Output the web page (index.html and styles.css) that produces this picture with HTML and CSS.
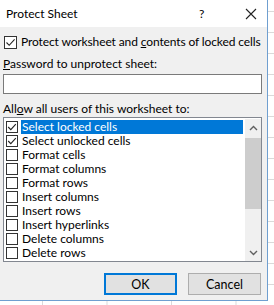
FILE: index.html
```html
<!DOCTYPE html>
<html lang="en">
<head>
    <meta charset="UTF-8">
    <title>Protect Sheet</title>
    <link rel="stylesheet" href="styles.css">
</head>
<body>

<div class="dialog">
    <div class="titlebar">
        <span class="title">Protect Sheet</span>
        <span class="help">?</span>
        <span class="close">
            <svg width="12" height="12" viewBox="0 0 12 12"><path d="M1 1L11 11M11 1L1 11" stroke="#222" stroke-width="1.1" fill="none"/></svg>
        </span>
    </div>

    <div class="content">
        <div class="check-row main">
            <span class="box"><svg width="11" height="11" viewBox="0 0 11 11"><path d="M1.5 5.5L4.2 8.3L9.6 2.4" stroke="#222" stroke-width="1.1" fill="none"/></svg></span>
            <span class="main-text">Protect worksheet and <u>c</u>ontents of locked cells</span>
        </div>

        <div class="label"><u>P</u>assword to unprotect sheet:</div>
        <div class="input"></div>

        <div class="label allow">All<u>o</u>w all users of this worksheet to:</div>

        <div class="list">
            <div class="items">
                <div class="item selected">
                    <span class="box"><svg width="10" height="10" viewBox="0 0 10 10"><path d="M1.2 5L3.8 7.6L8.8 2.2" stroke="#222" stroke-width="1.1" fill="none"/></svg></span>
                    <span class="text">Select locked cells</span>
                </div>
                <div class="item">
                    <span class="box"><svg width="10" height="10" viewBox="0 0 10 10"><path d="M1.2 5L3.8 7.6L8.8 2.2" stroke="#222" stroke-width="1.1" fill="none"/></svg></span>
                    <span class="text">Select unlocked cells</span>
                </div>
                <div class="item"><span class="box"></span><span class="text">Format cells</span></div>
                <div class="item"><span class="box"></span><span class="text">Format columns</span></div>
                <div class="item"><span class="box"></span><span class="text">Format rows</span></div>
                <div class="item"><span class="box"></span><span class="text">Insert columns</span></div>
                <div class="item"><span class="box"></span><span class="text">Insert rows</span></div>
                <div class="item"><span class="box"></span><span class="text">Insert hyperlinks</span></div>
                <div class="item"><span class="box"></span><span class="text">Delete columns</span></div>
                <div class="item"><span class="box"></span><span class="text">Delete rows</span></div>
            </div>
            <div class="scrollbar">
                <div class="arrow"><svg width="9" height="6" viewBox="0 0 9 6"><path d="M1 5L4.5 1.5L8 5" stroke="#606060" stroke-width="1.4" fill="none"/></svg></div>
                <div class="track"><div class="thumb"></div></div>
                <div class="arrow"><svg width="9" height="6" viewBox="0 0 9 6"><path d="M1 1L4.5 4.5L8 1" stroke="#606060" stroke-width="1.4" fill="none"/></svg></div>
            </div>
        </div>

        <div class="buttons">
            <button class="btn btn-default">OK</button>
            <button class="btn">Cancel</button>
        </div>
    </div>
</div>

</body>
</html>
```

FILE: styles.css
```css
* {
    margin: 0;
    padding: 0;
    box-sizing: border-box;
}
body {
    width: 274px;
    height: 305px;
    overflow: hidden;
    font-family: 'Lato', sans-serif;
    font-size: 12px;
    line-height: 14px;
    white-space: nowrap;
    color: #000;
    background-color: #fff;
    background-image:
        linear-gradient(to bottom, #dadada 1px, transparent 1px),
        linear-gradient(to right, #dadada 1px, transparent 1px);
    background-size: 100% 21px, 64.5px 100%;
    background-position: 0 11px, 42px 0;
}
.dialog {
    width: 268px;
    height: 301px;
    background: #f0f0f0;
    border-right: 1px solid #6f9fd0;
    border-bottom: 1px solid #6f9fd0;
}
.titlebar {
    height: 27px;
    background: #fff;
    display: flex;
    align-items: center;
    padding-left: 6px;
    font-size: 12px;
}
.title {
    flex: 1;
}
.help {
    width: 20px;
    margin-right: 26px;
}
.close {
    display: flex;
    width: 22px;
}
.content {
    padding: 8px 5px 0 3px;
}
.check-row {
    display: flex;
    align-items: center;
    height: 14px;
}
.check-row .box {
    width: 13px;
    height: 13px;
    margin: 0 4px 0 1px;
    border: 1px solid #333;
    background: #fff;
    display: flex;
    align-items: center;
    justify-content: center;
}
.main-text {
    letter-spacing: -0.12px;
}
.label {
    height: 15px;
    line-height: 15px;
    margin-top: 7px;
}
.input {
    margin-top: 3px;
    height: 20px;
    background: #fff;
    border: 1px solid #7a7a7a;
}
.label.allow {
    margin-top: 7px;
}
.list {
    margin-top: 1px;
    height: 145px;
    background: #fff;
    border: 1px solid #828790;
    display: flex;
    padding: 2px 0 0 2px;
}
.items {
    flex: 1;
    padding-right: 2px;
    overflow: hidden;
}
.item {
    display: flex;
    align-items: center;
    height: 14px;
}
.item .box {
    width: 12px;
    height: 12px;
    margin-right: 3px;
    border: 1px solid #333;
    display: flex;
    align-items: center;
    justify-content: center;
}
.item .text {
    flex: 1;
    height: 14px;
    line-height: 14px;
    padding-left: 1px;
}
.item.selected .text {
    background: #0078d7;
    color: #fff;
}
.scrollbar {
    width: 16px;
    margin-top: -1px;
    display: flex;
    flex-direction: column;
    background: #f0f0f0;
}
.arrow {
    height: 17px;
    display: flex;
    align-items: center;
    justify-content: center;
}
.track {
    flex: 1;
    padding-top: 2px;
}
.thumb {
    height: 71px;
    background: #cdcdcd;
}
.buttons {
    display: flex;
    justify-content: flex-end;
    gap: 11px;
    margin-top: 11px;
    padding-right: 1px;
}
.btn {
    width: 73px;
    height: 22px;
    font-family: 'Lato', sans-serif;
    font-size: 12.5px;
    color: #000;
    background: #e1e1e1;
    border: 1px solid #adadad;
}
.btn-default {
    border: 2px solid #0078d7;
}
```
